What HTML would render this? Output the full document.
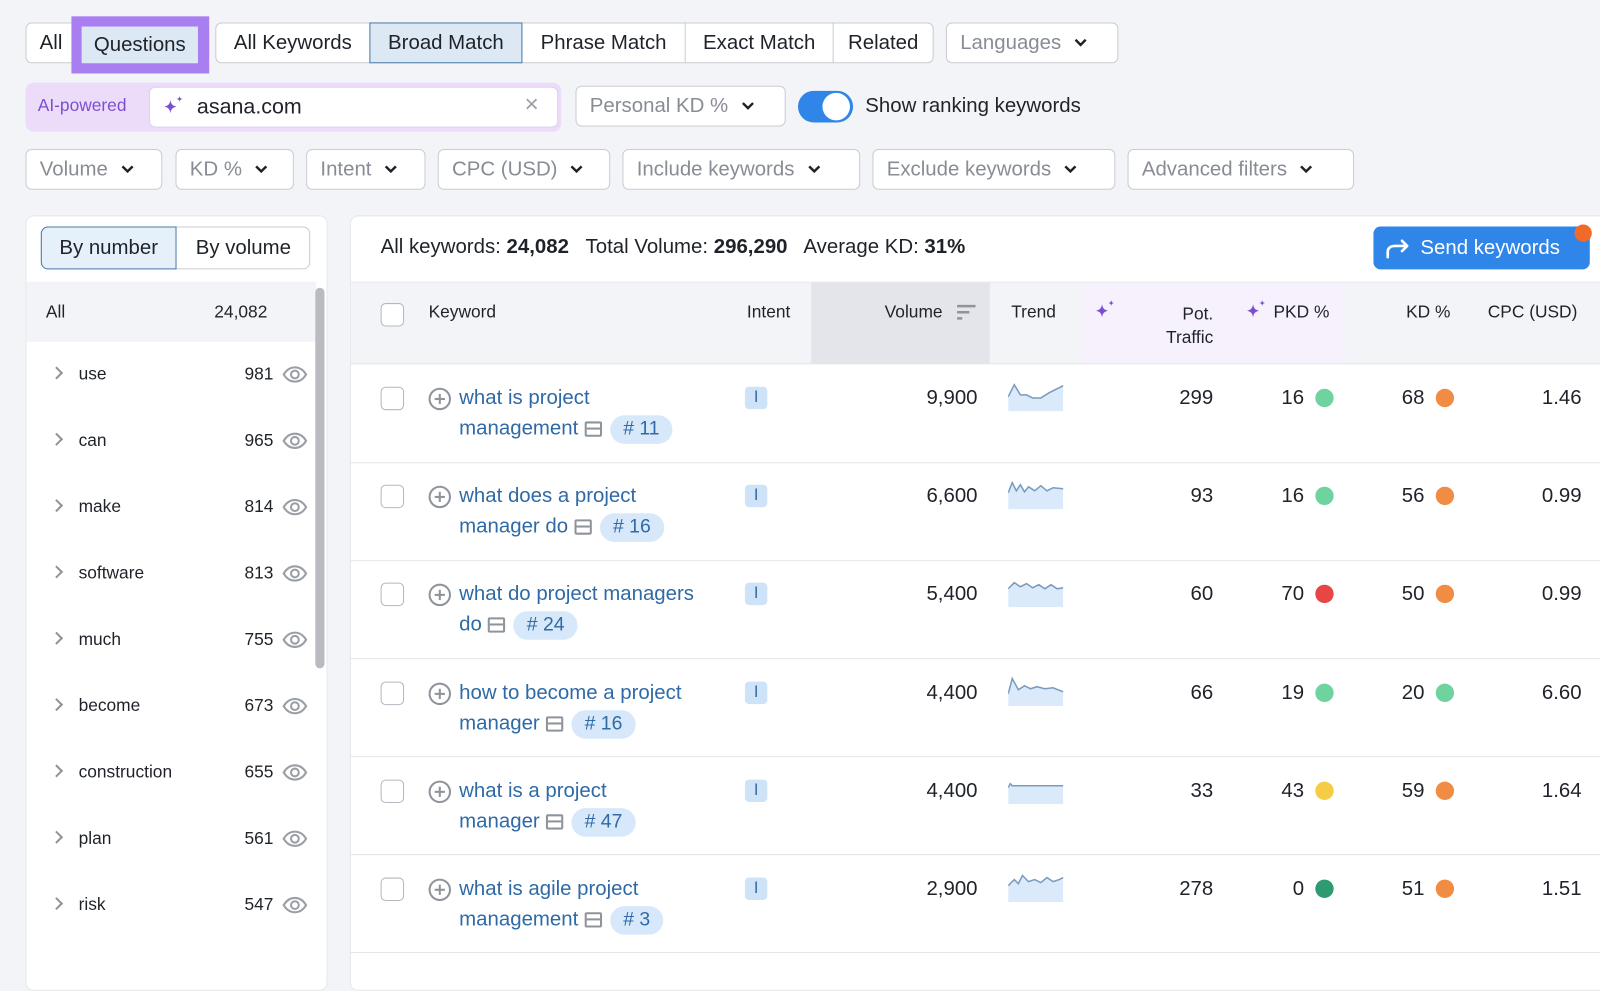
<!DOCTYPE html>
<html><head><meta charset="utf-8"><style>
*{box-sizing:border-box;margin:0;padding:0}
body{width:1600px;height:955px;background:#f3f4f8;font-family:"Liberation Sans",sans-serif;color:#1f2329;position:relative;overflow:hidden;font-size:20px}
#w{position:absolute;left:0;top:0;width:1568px;height:936px;transform:scale(1.0204);transform-origin:0 0}
.a{position:absolute}
.btn{position:absolute;height:40px;border:1px solid #c9ccd3;background:#fff;border-radius:6px;display:flex;align-items:center;font-size:20px;color:#888c94;padding-left:13px}
.btn svg{margin-left:12px}
.seg{position:absolute;height:40px;display:flex;align-items:center;justify-content:center;font-size:20px;color:#1f2329}
.hdr{position:absolute;font-size:17px;color:#1f2329}
.cb{position:absolute;width:23px;height:23px;border:1.5px solid #b4b7be;border-radius:5px;background:#fff}
.kw{position:absolute;left:450px;color:#2f6aa6;font-size:20px;line-height:30px}
.pl{position:absolute;left:420px;width:22px;height:22px;border:2px solid #8f939a;border-radius:50%}
.pl:before{content:"";position:absolute;left:4px;top:8px;width:10px;height:2px;background:#8f939a}
.pl:after{content:"";position:absolute;left:8px;top:4px;width:2px;height:10px;background:#8f939a}
.bd{display:inline-block;background:#d7e8fb;color:#2f6aa6;border-radius:14px;padding:0 13px;height:28px;line-height:28px;font-size:19px;margin-left:8px;vertical-align:middle}
.ic{display:inline-block;width:17px;height:15px;border:2px solid #8f939a;border-radius:2px;vertical-align:middle;margin-left:6px;position:relative}
.ic:after{content:"";position:absolute;left:0;right:0;top:4px;height:2px;background:#8f939a}
.it{position:absolute;left:730px;width:22px;height:22px;background:#cfe3f8;color:#2f6aa6;border-radius:4px;font-size:16px;text-align:center;line-height:22px}
.num{position:absolute;text-align:right;font-size:20px}
.dot{position:absolute;width:18px;height:18px;border-radius:50%}
.sr{position:absolute;left:25px;width:285px;height:65px;font-size:17px}
.sr .t{position:absolute;left:52px;top:22px}
.sr .n{position:absolute;right:42px;top:22px}
.sr .ch{position:absolute;left:26px;top:26px;width:9px;height:9px;border-right:2px solid #8f939a;border-top:2px solid #8f939a;transform:rotate(45deg)}
.eye{position:absolute;right:8px;top:22px}
</style></head><body>
<svg width="0" height="0" style="position:absolute"><defs>
<symbol id="chv" viewBox="0 0 14 10"><path d="M2 2l5 5 5-5" fill="none" stroke="#1f2329" stroke-width="2.4"/></symbol>
<symbol id="spk" viewBox="0 0 24 24"><path d="M9 5c.6 4 2 5.6 6 6.5-4 .9-5.4 2.5-6 6.5-.6-4-2-5.6-6-6.5 4-.9 5.4-2.5 6-6.5z" fill="#7b4fd0"/><path d="M18 1c.3 2 .9 2.7 3 3-2.1.3-2.7 1-3 3-.3-2-.9-2.7-3-3 2.1-.3 2.7-1 3-3z" fill="#7b4fd0"/></symbol>
<symbol id="eye" viewBox="0 0 26 20"><path d="M2 10c3-5 6.5-7 11-7s8 2 11 7c-3 5-6.5 7-11 7S5 15 2 10z" fill="none" stroke="#9a9ea5" stroke-width="2"/><circle cx="13" cy="10" r="3.8" fill="none" stroke="#9a9ea5" stroke-width="2"/></symbol>
</defs></svg>
<div id="w">
<!-- row 1 -->
<div class="a" style="left:25px;top:22px;width:180px;height:40px;border:1px solid #c9ccd3;border-radius:6px;background:#fff"></div>
<div class="seg" style="left:26px;top:22px;width:48px">All</div>
<div class="a" style="left:70px;top:16px;width:135px;height:56px;background:#a97ef0"></div>
<div class="seg" style="left:80px;top:26px;width:114px;height:36px;background:#dde8f5">Questions</div>
<div class="a" style="left:211px;top:22px;width:704px;height:40px;border:1px solid #c9ccd3;border-radius:6px;background:#fff"></div>
<div class="seg" style="left:212px;top:22px;width:150px">All Keywords</div>
<div class="seg" style="left:362px;top:22px;width:150px;background:#dde8f5;border:1px solid #4a7aa8">Broad Match</div>
<div class="seg" style="left:512px;top:22px;width:160px;border-right:1px solid #c9ccd3">Phrase Match</div>
<div class="seg" style="left:672px;top:22px;width:145px;border-right:1px solid #c9ccd3">Exact Match</div>
<div class="seg" style="left:817px;top:22px;width:97px">Related</div>
<div class="btn" style="left:927px;top:22px;width:169px">Languages<svg width="14" height="10"><use href="#chv"/></svg></div>

<!-- row 2 -->
<div class="a" style="left:25px;top:81px;width:525px;height:48px;background:#ecdcfa;border-radius:8px"></div>
<div class="a" style="left:37px;top:94px;font-size:17px;color:#7b4fd0">AI-powered</div>
<div class="a" style="left:146px;top:85px;width:401px;height:40px;background:#fff;border:1px solid #ddd0f3;border-radius:6px"></div>
<svg class="a" style="left:158px;top:93px" width="24" height="24"><use href="#spk"/></svg>
<div class="a" style="left:193px;top:93px;font-size:21px">asana.com</div>
<div class="a" style="left:514px;top:89px;font-size:24px;color:#9a9ea5">×</div>
<div class="btn" style="left:564px;top:84px;width:206px">Personal KD %<svg width="14" height="10"><use href="#chv"/></svg></div>
<div class="a" style="left:782px;top:89px;width:54px;height:31px;border-radius:16px;background:#2f85e8"></div>
<div class="a" style="left:806px;top:91px;width:27px;height:27px;border-radius:50%;background:#fff"></div>
<div class="a" style="left:848px;top:93px;font-size:20px">Show ranking keywords</div>

<!-- row 3 -->
<div class="btn" style="left:25px;top:146px;width:134px">Volume<svg width="14" height="10"><use href="#chv"/></svg></div>
<div class="btn" style="left:172px;top:146px;width:116px">KD %<svg width="14" height="10"><use href="#chv"/></svg></div>
<div class="btn" style="left:300px;top:146px;width:117px">Intent<svg width="14" height="10"><use href="#chv"/></svg></div>
<div class="btn" style="left:429px;top:146px;width:169px">CPC (USD)<svg width="14" height="10"><use href="#chv"/></svg></div>
<div class="btn" style="left:610px;top:146px;width:233px">Include keywords<svg width="14" height="10"><use href="#chv"/></svg></div>
<div class="btn" style="left:855px;top:146px;width:238px">Exclude keywords<svg width="14" height="10"><use href="#chv"/></svg></div>
<div class="btn" style="left:1105px;top:146px;width:222px">Advanced filters<svg width="14" height="10"><use href="#chv"/></svg></div>

<!-- sidebar -->
<div class="a" style="left:25px;top:211px;width:296px;height:760px;background:#fff;border-radius:8px;border:1px solid #e6e8ec"></div>
<div class="a" style="left:40px;top:222px;width:264px;height:42px;border:1px solid #c9ccd3;border-radius:7px;background:#fff"></div>
<div class="seg" style="left:40px;top:222px;width:133px;height:42px;background:#e6f0fb;border:1px solid #4a7aa8;border-radius:7px 0 0 7px">By number</div>
<div class="seg" style="left:173px;top:222px;width:131px;height:42px">By volume</div>
<div class="a" style="left:26px;top:276px;width:284px;height:59px;background:#f3f4f8"></div>
<div class="a" style="left:45px;top:296px;font-size:17px">All</div>
<div class="a" style="left:210px;top:296px;font-size:17px">24,082</div>
<div class="a" style="left:309px;top:282px;width:9px;height:373px;background:#b9bbc0;border-radius:5px"></div>
<div class="sr" style="top:335px"><i class="ch"></i><span class="t">use</span><span class="n">981</span><svg class="eye" width="26" height="20"><use href="#eye"/></svg></div>
<div class="sr" style="top:400px"><i class="ch"></i><span class="t">can</span><span class="n">965</span><svg class="eye" width="26" height="20"><use href="#eye"/></svg></div>
<div class="sr" style="top:465px"><i class="ch"></i><span class="t">make</span><span class="n">814</span><svg class="eye" width="26" height="20"><use href="#eye"/></svg></div>
<div class="sr" style="top:530px"><i class="ch"></i><span class="t">software</span><span class="n">813</span><svg class="eye" width="26" height="20"><use href="#eye"/></svg></div>
<div class="sr" style="top:595px"><i class="ch"></i><span class="t">much</span><span class="n">755</span><svg class="eye" width="26" height="20"><use href="#eye"/></svg></div>
<div class="sr" style="top:660px"><i class="ch"></i><span class="t">become</span><span class="n">673</span><svg class="eye" width="26" height="20"><use href="#eye"/></svg></div>
<div class="sr" style="top:725px"><i class="ch"></i><span class="t">construction</span><span class="n">655</span><svg class="eye" width="26" height="20"><use href="#eye"/></svg></div>
<div class="sr" style="top:790px"><i class="ch"></i><span class="t">plan</span><span class="n">561</span><svg class="eye" width="26" height="20"><use href="#eye"/></svg></div>
<div class="sr" style="top:855px"><i class="ch"></i><span class="t">risk</span><span class="n">547</span><svg class="eye" width="26" height="20"><use href="#eye"/></svg></div>

<!-- main table -->
<div class="a" style="left:343px;top:211px;width:1270px;height:760px;background:#fff;border-radius:8px;border:1px solid #e6e8ec"></div>
<div class="a" style="left:373px;top:231px;font-size:20px">All keywords: <b>24,082</b>&nbsp;&nbsp; Total Volume: <b>296,290</b>&nbsp;&nbsp; Average KD: <b>31%</b></div>
<div class="a" style="left:1346px;top:222px;width:212px;height:42px;background:#2f85e8;border-radius:7px;color:#fff;font-size:20px;display:flex;align-items:center;padding-left:46px">Send keywords</div>
<svg class="a" style="left:1357px;top:232px" width="26" height="22"><path d="M3 20v-5c0-4 3-6 7-6h12M17 4l5 5-5 5" fill="none" stroke="#fff" stroke-width="2.6" stroke-linecap="round" stroke-linejoin="round"/></svg>
<div class="a" style="left:1543px;top:220px;width:17px;height:17px;border-radius:50%;background:#f06a2a"></div>

<div class="a" style="left:344px;top:276px;width:1256px;height:81px;background:#f3f4f8;border-top:1px solid #e6e8ec;border-bottom:1px solid #e3e5ea"></div>
<div class="a" style="left:795px;top:277px;width:175px;height:79px;background:#e3e5ea"></div>
<div class="a" style="left:1062px;top:277px;width:256px;height:79px;background:#f6f1fc"></div>
<div class="cb" style="left:373px;top:297px"></div>
<div class="hdr" style="left:420px;top:296px">Keyword</div>
<div class="hdr" style="left:732px;top:296px">Intent</div>
<div class="hdr" style="left:867px;top:296px">Volume</div>
<svg class="a" style="left:937px;top:298px" width="20" height="16"><path d="M1 2h18M1 8h12M1 14h5" stroke="#8f939a" stroke-width="2.4"/></svg>
<div class="hdr" style="left:991px;top:296px">Trend</div>
<svg class="a" style="left:1071px;top:293px" width="24" height="24"><use href="#spk"/></svg>
<div class="hdr" style="left:1120px;top:296px;width:69px;text-align:right;line-height:23px">Pot.<br>Traffic</div>
<svg class="a" style="left:1219px;top:293px" width="24" height="24"><use href="#spk"/></svg>
<div class="hdr" style="left:1248px;top:296px">PKD %</div>
<div class="hdr" style="left:1378px;top:296px">KD %</div>
<div class="hdr" style="left:1458px;top:296px">CPC (USD)</div>

<div class="a" style="left:344px;top:453px;width:1256px;height:1px;background:#e3e5ea"></div>
<div class="a" style="left:344px;top:549px;width:1256px;height:1px;background:#e3e5ea"></div>
<div class="a" style="left:344px;top:645px;width:1256px;height:1px;background:#e3e5ea"></div>
<div class="a" style="left:344px;top:741px;width:1256px;height:1px;background:#e3e5ea"></div>
<div class="a" style="left:344px;top:837px;width:1256px;height:1px;background:#e3e5ea"></div>
<div class="a" style="left:344px;top:933px;width:1256px;height:1px;background:#e3e5ea"></div>

<!-- R1 -->
<div class="cb" style="left:373px;top:379px"></div><div class="pl" style="top:380px"></div>
<div class="kw" style="top:375px">what is project<br>management<span class="ic"></span><span class="bd"># 11</span></div>
<div class="it" style="top:379px">I</div>
<div class="num" style="left:860px;width:98px;top:379px">9,900</div>
<svg class="a" style="left:988px;top:373px" width="54" height="30"><path d="M0 16L6 4 12 14 18 14 24 17 32 17 40 12 54 5V30H0z" fill="#dbeafa"/><path d="M0 16L6 4 12 14 18 14 24 17 32 17 40 12 54 5" fill="none" stroke="#7a9bbd" stroke-width="1.5"/></svg>
<div class="num" style="left:1100px;width:89px;top:379px">299</div>
<div class="num" style="left:1220px;width:58px;top:379px">16</div><div class="dot" style="left:1289px;top:381px;background:#6fd3a0"></div>
<div class="num" style="left:1340px;width:56px;top:379px">68</div><div class="dot" style="left:1407px;top:381px;background:#f08c43"></div>
<div class="num" style="left:1460px;width:90px;top:379px">1.46</div>
<!-- R2 -->
<div class="cb" style="left:373px;top:475px"></div><div class="pl" style="top:476px"></div>
<div class="kw" style="top:471px">what does a project<br>manager do<span class="ic"></span><span class="bd"># 16</span></div>
<div class="it" style="top:475px">I</div>
<div class="num" style="left:860px;width:98px;top:475px">6,600</div>
<svg class="a" style="left:988px;top:469px" width="54" height="30"><path d="M0 14L4 4 8 12 12 6 16 13 20 8 26 12 32 7 38 12 44 9 54 10V30H0z" fill="#dbeafa"/><path d="M0 14L4 4 8 12 12 6 16 13 20 8 26 12 32 7 38 12 44 9 54 10" fill="none" stroke="#7a9bbd" stroke-width="1.5"/></svg>
<div class="num" style="left:1100px;width:89px;top:475px">93</div>
<div class="num" style="left:1220px;width:58px;top:475px">16</div><div class="dot" style="left:1289px;top:477px;background:#6fd3a0"></div>
<div class="num" style="left:1340px;width:56px;top:475px">56</div><div class="dot" style="left:1407px;top:477px;background:#f08c43"></div>
<div class="num" style="left:1460px;width:90px;top:475px">0.99</div>
<!-- R3 -->
<div class="cb" style="left:373px;top:571px"></div><div class="pl" style="top:572px"></div>
<div class="kw" style="top:567px">what do project managers<br>do<span class="ic"></span><span class="bd"># 24</span></div>
<div class="it" style="top:571px">I</div>
<div class="num" style="left:860px;width:98px;top:571px">5,400</div>
<svg class="a" style="left:988px;top:565px" width="54" height="30"><path d="M0 12L6 6 12 10 18 7 24 11 30 8 36 12 42 8 48 12 54 11V30H0z" fill="#dbeafa"/><path d="M0 12L6 6 12 10 18 7 24 11 30 8 36 12 42 8 48 12 54 11" fill="none" stroke="#7a9bbd" stroke-width="1.5"/></svg>
<div class="num" style="left:1100px;width:89px;top:571px">60</div>
<div class="num" style="left:1220px;width:58px;top:571px">70</div><div class="dot" style="left:1289px;top:573px;background:#e84545"></div>
<div class="num" style="left:1340px;width:56px;top:571px">50</div><div class="dot" style="left:1407px;top:573px;background:#f08c43"></div>
<div class="num" style="left:1460px;width:90px;top:571px">0.99</div>
<!-- R4 -->
<div class="cb" style="left:373px;top:668px"></div><div class="pl" style="top:669px"></div>
<div class="kw" style="top:664px">how to become a project<br>manager<span class="ic"></span><span class="bd"># 16</span></div>
<div class="it" style="top:668px">I</div>
<div class="num" style="left:860px;width:98px;top:668px">4,400</div>
<svg class="a" style="left:988px;top:662px" width="54" height="30"><path d="M0 18L4 3 10 14 16 10 22 13 28 11 36 13 44 12 54 16V30H0z" fill="#dbeafa"/><path d="M0 18L4 3 10 14 16 10 22 13 28 11 36 13 44 12 54 16" fill="none" stroke="#7a9bbd" stroke-width="1.5"/></svg>
<div class="num" style="left:1100px;width:89px;top:668px">66</div>
<div class="num" style="left:1220px;width:58px;top:668px">19</div><div class="dot" style="left:1289px;top:670px;background:#6fd3a0"></div>
<div class="num" style="left:1340px;width:56px;top:668px">20</div><div class="dot" style="left:1407px;top:670px;background:#6fd3a0"></div>
<div class="num" style="left:1460px;width:90px;top:668px">6.60</div>
<!-- R5 -->
<div class="cb" style="left:373px;top:764px"></div><div class="pl" style="top:765px"></div>
<div class="kw" style="top:760px">what is a project<br>manager<span class="ic"></span><span class="bd"># 47</span></div>
<div class="it" style="top:764px">I</div>
<div class="num" style="left:860px;width:98px;top:764px">4,400</div>
<svg class="a" style="left:988px;top:758px" width="54" height="30"><path d="M0 14L2 10 4 12 54 12V30H0z" fill="#dbeafa"/><path d="M0 14L2 10 4 12 54 12" fill="none" stroke="#7a9bbd" stroke-width="1.5"/></svg>
<div class="num" style="left:1100px;width:89px;top:764px">33</div>
<div class="num" style="left:1220px;width:58px;top:764px">43</div><div class="dot" style="left:1289px;top:766px;background:#f5cc45"></div>
<div class="num" style="left:1340px;width:56px;top:764px">59</div><div class="dot" style="left:1407px;top:766px;background:#f08c43"></div>
<div class="num" style="left:1460px;width:90px;top:764px">1.64</div>
<!-- R6 -->
<div class="cb" style="left:373px;top:860px"></div><div class="pl" style="top:861px"></div>
<div class="kw" style="top:856px">what is agile project<br>management<span class="ic"></span><span class="bd"># 3</span></div>
<div class="it" style="top:860px">I</div>
<div class="num" style="left:860px;width:98px;top:860px">2,900</div>
<svg class="a" style="left:988px;top:854px" width="54" height="30"><path d="M0 14L6 8 10 12 14 4 20 10 26 8 32 11 38 6 44 10 50 8 54 6V30H0z" fill="#dbeafa"/><path d="M0 14L6 8 10 12 14 4 20 10 26 8 32 11 38 6 44 10 50 8 54 6" fill="none" stroke="#7a9bbd" stroke-width="1.5"/></svg>
<div class="num" style="left:1100px;width:89px;top:860px">278</div>
<div class="num" style="left:1220px;width:58px;top:860px">0</div><div class="dot" style="left:1289px;top:862px;background:#2e9a72"></div>
<div class="num" style="left:1340px;width:56px;top:860px">51</div><div class="dot" style="left:1407px;top:862px;background:#f08c43"></div>
<div class="num" style="left:1460px;width:90px;top:860px">1.51</div>
</div>
</body></html>
